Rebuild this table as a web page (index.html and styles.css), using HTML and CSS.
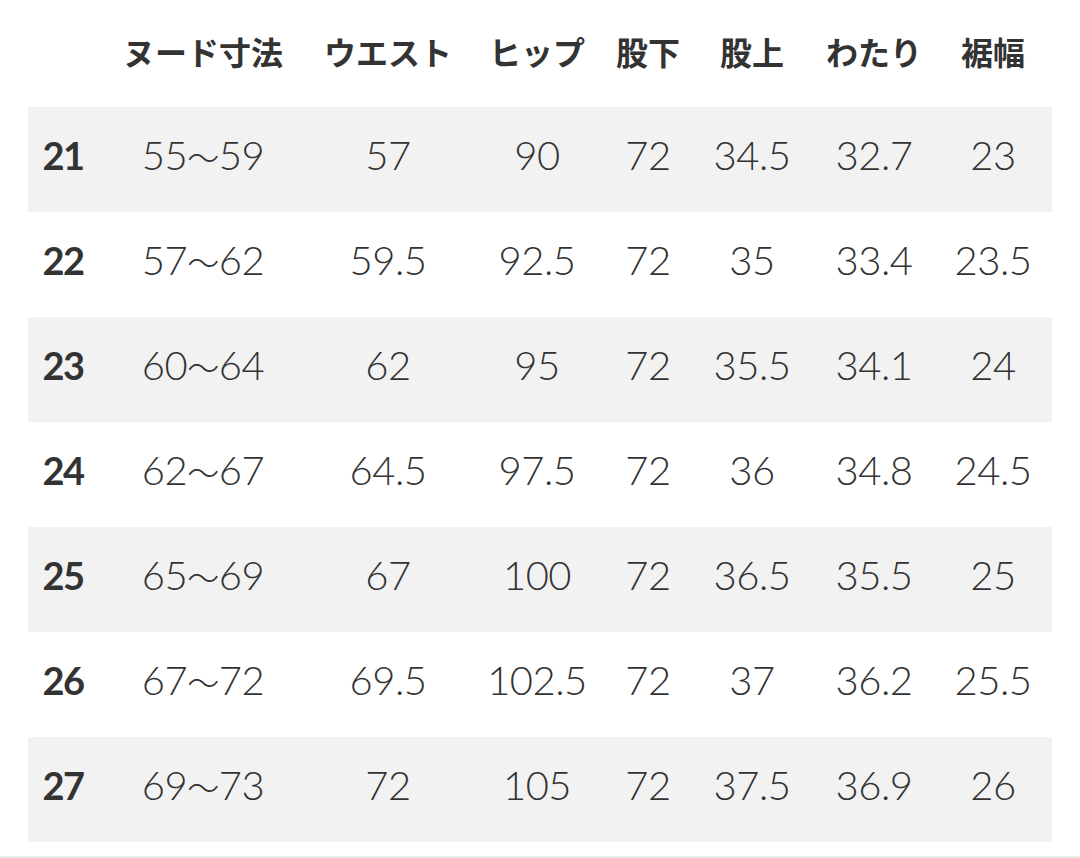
FILE: index.html
```html
<!DOCTYPE html>
<html lang="ja">
<head>
<meta charset="utf-8">
<link rel="stylesheet" href="styles.css">
</head>
<body>
<div class="page">
  <div class="table">
    <div class="row head">
      <div class="cell"></div>
      <div class="cell">ヌード寸法</div>
      <div class="cell">ウエスト</div>
      <div class="cell">ヒップ</div>
      <div class="cell">股下</div>
      <div class="cell">股上</div>
      <div class="cell">わたり</div>
      <div class="cell">裾幅</div>
    </div>
    <div class="row shade">
      <div class="cell size">21</div><div class="cell">55<span class="tl">～</span>59</div><div class="cell">57</div><div class="cell">90</div><div class="cell">72</div><div class="cell">34.5</div><div class="cell">32.7</div><div class="cell">23</div>
    </div>
    <div class="row">
      <div class="cell size">22</div><div class="cell">57<span class="tl">～</span>62</div><div class="cell">59.5</div><div class="cell">92.5</div><div class="cell">72</div><div class="cell">35</div><div class="cell">33.4</div><div class="cell">23.5</div>
    </div>
    <div class="row shade">
      <div class="cell size">23</div><div class="cell">60<span class="tl">～</span>64</div><div class="cell">62</div><div class="cell">95</div><div class="cell">72</div><div class="cell">35.5</div><div class="cell">34.1</div><div class="cell">24</div>
    </div>
    <div class="row">
      <div class="cell size">24</div><div class="cell">62<span class="tl">～</span>67</div><div class="cell">64.5</div><div class="cell">97.5</div><div class="cell">72</div><div class="cell">36</div><div class="cell">34.8</div><div class="cell">24.5</div>
    </div>
    <div class="row shade">
      <div class="cell size">25</div><div class="cell">65<span class="tl">～</span>69</div><div class="cell">67</div><div class="cell">100</div><div class="cell">72</div><div class="cell">36.5</div><div class="cell">35.5</div><div class="cell">25</div>
    </div>
    <div class="row">
      <div class="cell size">26</div><div class="cell">67<span class="tl">～</span>72</div><div class="cell">69.5</div><div class="cell">102.5</div><div class="cell">72</div><div class="cell">37</div><div class="cell">36.2</div><div class="cell">25.5</div>
    </div>
    <div class="row shade">
      <div class="cell size">27</div><div class="cell">69<span class="tl">～</span>73</div><div class="cell">72</div><div class="cell">105</div><div class="cell">72</div><div class="cell">37.5</div><div class="cell">36.9</div><div class="cell">26</div>
    </div>
  </div>
  <div class="rule"></div>
</div>
</body>
</html>
```

FILE: styles.css
```css
html, body {
  margin: 0;
  padding: 0;
  background: #ffffff;
}
.page {
  width: 1080px;
  height: 858px;
  display: flex;
  flex-direction: column;
}
.table {
  margin: 0 28px;
  display: flex;
  flex-direction: column;
}
.row {
  display: grid;
  grid-template-columns: 70px 210px 160px 138px 84px 124px 120px 118px;
  height: 105px;
  align-items: center;
  color: #333333;
  font-family: "Lato", "Noto Sans CJK JP", sans-serif;
  font-weight: 300;
  font-size: 40px;
  letter-spacing: -0.5px;
}
.row.head {
  height: 107px;
  font-family: "Noto Sans CJK JP", sans-serif;
  font-weight: 700;
  font-size: 32px;
  letter-spacing: 0;
  padding-bottom: 2px;
  box-sizing: border-box;
}
.row.shade {
  background: #f2f2f2;
}
.cell {
  text-align: center;
  white-space: nowrap;
  padding-bottom: 10px;
}
.row.head .cell {
  padding-bottom: 4px;
}
.cell.size {
  font-weight: 700;
  font-size: 38px;
  letter-spacing: -1.5px;
}
.tl {
  font-family: "Noto Sans CJK JP", sans-serif;
  font-weight: 300;
  font-size: 32px;
}
.rule {
  margin-top: auto;
  height: 2px;
  background: #ebebeb;
}
```
